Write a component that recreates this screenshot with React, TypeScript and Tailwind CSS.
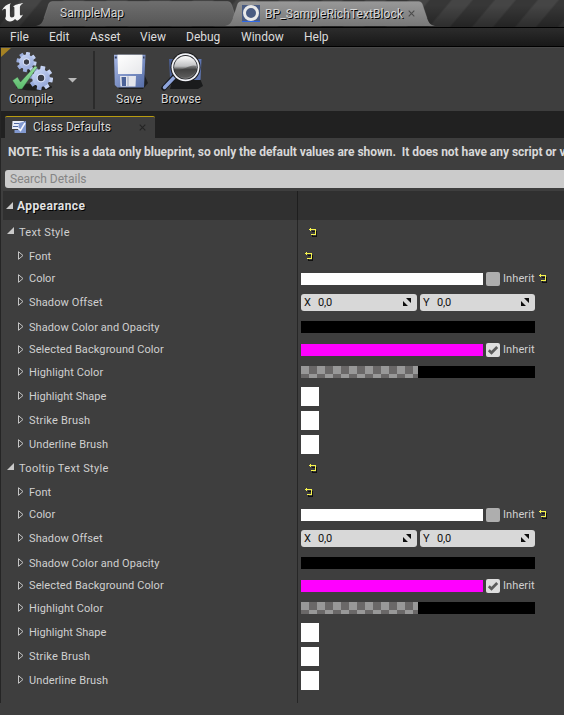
import React from "react";

const shadow = "[text-shadow:1px_1px_0_#000]";

function Gear({ cx, cy, r, id }: { cx: number; cy: number; r: number; id: string }) {
  return (
    <g fill={`url(#${id})`} transform={`translate(${cx} ${cy})`}>
      {[10, 55, 100, 145].map((a) => (
        <rect key={a} x={-r * 0.2} y={-r} width={r * 0.4} height={r * 2} rx="0.4" transform={`rotate(${a})`} />
      ))}
      <circle r={r * 0.74} />
      <circle r={r * 0.27} fill="#3a3d46" />
      <circle r={r * 0.33} fill="none" stroke="#e6ecfc" strokeWidth="0.8" />
    </g>
  );
}

function CompileIcon() {
  return (
    <svg width="44" height="40" viewBox="0 0 44 40" className="block">
      <defs>
        <linearGradient id="gear" gradientUnits="userSpaceOnUse" x1="-8" y1="-10" x2="8" y2="10">
          <stop offset="0" stopColor="#d0dcf8" />
          <stop offset="1" stopColor="#8b9fd4" />
        </linearGradient>
        <linearGradient id="tick" x1="0" y1="0" x2="0" y2="1">
          <stop offset="0" stopColor="#98dfa0" />
          <stop offset="1" stopColor="#5bbb6c" />
        </linearGradient>
      </defs>
      <ellipse cx="25" cy="35" rx="18" ry="3.500" fill="#151515" opacity=".75" />
      <path d="M20 15 L28 16 L24 25 L18 26Z" fill="#242628" />
      <Gear cx={17.5} cy={10} r={10} id="gear" />
      <Gear cx={32} cy={26} r={12} id="gear" />
      <path d="M3.500 28.500 L8.500 25 L11.500 30 L26 14 L28.500 15 L13 37 L9 37Z" fill="url(#tick)" stroke="#2f4a36" strokeWidth=".4" />
    </svg>
  );
}

function SaveIcon() {
  return (
    <svg width="38" height="38" viewBox="0 0 38 38" className="block">
      <defs>
        <linearGradient id="disk" x1="0" y1="0" x2="1" y2="1">
          <stop offset="0" stopColor="#a6b7e5" />
          <stop offset="1" stopColor="#556da7" />
        </linearGradient>
        <linearGradient id="paper" x1="0" y1="0" x2="1" y2="1">
          <stop offset="0" stopColor="#ffffff" />
          <stop offset="1" stopColor="#e6e7ea" />
        </linearGradient>
      </defs>
      <path d="M6 30 L33 20 L37 29 L32 35 L8 35Z" fill="#171819" opacity=".8" />
      <path d="M3 .8 H34.500 L33 33.500 H6.500 L3.800 31Z" fill="url(#disk)" />
      <path d="M6.500 .8 H31.500 L31 20 H7Z" fill="url(#paper)" />
      <path d="M9 22 H25 L24.500 32.500 H9.500Z" fill="#e4e6ed" />
      <path d="M10.500 23 H15 V32 H11Z" fill="#4b6298" />
      <rect x="16.500" y="22.500" width="1" height="9.500" fill="#9aa5c0" />
      <path d="M3.800 2.500h2v2h-2zM32 2.500h1.500v2h-1.500z" fill="#343f5e" />
    </svg>
  );
}

function BrowseIcon() {
  return (
    <svg width="42" height="40" viewBox="0 0 42 40" className="block">
      <defs>
        <linearGradient id="lens" x1="0" y1="0" x2="0" y2="1">
          <stop offset="0" stopColor="#ffffff" />
          <stop offset=".45" stopColor="#bfc0c2" />
          <stop offset=".6" stopColor="#4a4a4a" />
          <stop offset="1" stopColor="#858585" />
        </linearGradient>
      </defs>
      <path d="M12 26 L38 24 L42 34 L37 37 H9Z" fill="#141516" opacity=".85" />
      <path d="M8 7 H14 V26 H9Z" fill="#4b5f94" />
      <path d="M34 7 H40.500 L39.500 28 H31Z" fill="#5f76b2" />
      <path d="M3 36 L14 24" stroke="#16191f" strokeWidth="5.500" strokeLinecap="round" />
      <path d="M3.500 35.500 L14 24.500" stroke="#8fa5dc" strokeWidth="3.400" strokeLinecap="round" />
      <circle cx="24.500" cy="15.300" r="15" fill="#191a1c" />
      <circle cx="24.500" cy="15.300" r="14" fill="#f3f4f8" />
      <circle cx="24.500" cy="15.300" r="12.200" fill="#25272b" />
      <circle cx="24.500" cy="15.300" r="11.400" fill="url(#lens)" />
      <path d="M13.500 17.500 C20 21 29 11 35.500 14 C35 24 26 27 21 25.500 C17 24.500 14.500 21.500 13.500 17.500Z" fill="#3a3a3a" opacity=".5" />
    </svg>
  );
}

function UnrealLogo() {
  return (
    <svg width="24" height="22" viewBox="0 0 24 22" className="block">
      <path
        d="M.8 9.800 C2.400 5.600 6 3 10 2.200 C8.900 3.200 8.900 4.200 8.900 5.400 V14.300 C8.900 15.900 9.700 16.500 10.800 16.500 C12.200 16.500 13.400 15.500 13.400 14.200 V6.900 C13.400 5.900 12.700 5.500 11.900 5.900 C13.600 3.500 17.800 3 22.300 2 C20.500 3.200 18.900 4.500 18.900 6 V13.500 C18.900 14.900 20.300 15 22 13.600 C20.800 16.600 18.600 18.800 16.100 19.700 L14 17.900 C12.800 19.500 10.600 20.600 8.600 20.400 C5.600 20 4 18.500 4.200 17 C4.700 16.300 4.900 15.800 4.900 14.700 V9.300 C4.900 7 3 7.300 .8 9.800Z"
        fill="#f4f4f4"
      />
    </svg>
  );
}

function TabShape({ w, id, top, bottom }: { w: number; id: string; top: string; bottom: string }) {
  return (
    <svg width={w} height="25" className="absolute inset-0">
      <defs>
        <linearGradient id={id} x1="0" y1="0" x2="0" y2="1">
          <stop offset="0" stopColor={top} />
          <stop offset="1" stopColor={bottom} />
        </linearGradient>
      </defs>
      <path
        d={`M0 25 C5 24 6 22 8 17 L12 5 C13 1.500 14 .5 17 .5 H${w - 17} C${w - 14} .5 ${w - 13} 1.500 ${w - 12} 5 L${w - 8} 17 C${w - 6} 22 ${w - 5} 24 ${w} 25Z`}
        fill={`url(#${id})`}
      />
      <path
        d={`M8 17 L12 5 C13 1.500 14 .5 17 .5 H${w - 17} C${w - 14} .5 ${w - 13} 1.500 ${w - 12} 5 L${w - 8} 17`}
        fill="none"
        stroke="#a0a0a0"
        strokeOpacity=".25"
      />
    </svg>
  );
}

function Cross({ color }: { color: string }) {
  return (
    <svg width="7" height="7" viewBox="0 0 7 7" className="block">
      <path d="M.7 .7 L6.300 6.300 M6.300 .7 L.7 6.300" stroke={color} strokeWidth="1.100" />
    </svg>
  );
}

function Reset() {
  return (
    <svg width="9" height="9" viewBox="0 0 9 9" shapeRendering="crispEdges" className="block shrink-0">
      <path d="M3 3h5v6h-5v-2h1v1h3v-4h-4z" fill="#111" />
      <path d="M0 1h1v-1h1v1h5v6h-5v-1h4v-4h-4v1h-1v-1h-1z" fill="#f5f34e" />
    </svg>
  );
}

function Open() {
  return (
    <svg width="7" height="7" viewBox="0 0 7 7" className="block shrink-0">
      <path d="M7 0V7H0Z" fill="#c9c9c9" />
    </svg>
  );
}

function Closed() {
  return (
    <svg width="6" height="9" viewBox="0 0 6 9" className="mb-[2px] block shrink-0">
      <path d="M.5 .7V8.300L5 4.500Z" fill="none" stroke="#c4c4c4" strokeWidth="1" />
    </svg>
  );
}

function NumberField({ axis, wide }: { axis: string; wide?: boolean }) {
  return (
    <div
      className={`flex h-[17px] items-center rounded-[3px] bg-[#d8d8d8] pl-[3px] text-[11px] leading-[17px] text-[#111] ${wide ? "w-[116px]" : "w-[115px]"}`}
    >
      <span className="w-[14px]">{axis}</span>
      <span className="flex-1 tracking-[-0.2px]">0,0</span>
      <svg width="8" height="8" viewBox="0 0 8 8" className="mr-[6px] mb-px block">
        <path d="M3 0H8V5ZM0 3V8H5Z" fill="#0c0c0c" />
      </svg>
    </div>
  );
}

function Inherit({ checked }: { checked?: boolean }) {
  return (
    <>
      <div className={`ml-[3px] h-[14px] w-[14px] rounded-[2px] ${checked ? "bg-[#dedede]" : "bg-[#aeaeae]"}`}>
        {checked && (
          <svg width="14" height="14" viewBox="0 0 14 14" className="block">
            <path d="M2.800 7.200 L5.500 9.800 L11.200 4" fill="none" stroke="#5c5c5c" strokeWidth="2.700" />
          </svg>
        )}
      </div>
      <span className="ml-[3px] w-[32px] text-[11px] leading-[16px] tracking-[0.1px] text-[#d0d0d0]">Inherit</span>
    </>
  );
}

function Row({ label, h, track, children }: { label: string; h: string; track: string; children: React.ReactNode }) {
  return (
    <div className={`flex ${h}`}>
      <div className="flex w-[297px] items-center border-r border-[#262626] pl-[17px]">
        <Closed />
        <span className={`ml-[5px] text-[11px] leading-[16px] text-[#d0d0d0] ${h === "h-[22px]" ? "" : "pt-px"} ${track}`}>{label}</span>
      </div>
      <div className="flex items-center pl-[3px]">{children}</div>
    </div>
  );
}

function Brush() {
  return <div className="h-[19px] w-[18px] bg-white" />;
}

function StyleGroup({ title }: { title: string }) {
  return (
    <div>
      <div className="flex h-6">
        <div className="flex w-[297px] items-center border-r border-[#262626] pl-[6px]">
          <div className="mb-[3px]">
            <Open />
          </div>
          <span className="ml-[5px] pt-px text-[11px] leading-[16px] tracking-[0.33px] text-[#d0d0d0]">{title}</span>
        </div>
        <div className="flex items-center pl-[11px]">
          <Reset />
        </div>
      </div>
      <Row label="Font" h="h-6" track="tracking-[0.1px]">
        <div className="pl-1">
          <Reset />
        </div>
      </Row>
      <Row label="Color" h="h-[22px]" track="tracking-[0px]">
        <div className="h-3 w-[182px] bg-white" />
        <Inherit />
        <div className="mb-px ml-1">
          <Reset />
        </div>
      </Row>
      <Row label="Shadow Offset" h="h-[25px]" track="tracking-[0.1px]">
        <div className="flex gap-[3px]">
          <NumberField axis="X" wide />
          <NumberField axis="Y" />
        </div>
      </Row>
      <Row label="Shadow Color and Opacity" h="h-6" track="tracking-[0.07px]">
        <div className="h-3 w-[234px] bg-black" />
      </Row>
      <Row label="Selected Background Color" h="h-[22px]" track="tracking-[0.1px]">
        <div className="h-3 w-[182px] bg-[#ff00ff]" />
        <Inherit checked />
      </Row>
      <Row label="Highlight Color" h="h-[23px]" track="tracking-[0.1px]">
        <div className="mb-px h-3 w-[117px] bg-[repeating-conic-gradient(#6a6868_0_25%,#989898_0_50%)] bg-[length:16px_16px]" />
        <div className="mb-px h-3 w-[117px] bg-black" />
      </Row>
      <Row label="Highlight Shape" h="h-6" track="tracking-[0px]">
        <Brush />
      </Row>
      <Row label="Strike Brush" h="h-6" track="tracking-[0.2px]">
        <Brush />
      </Row>
      <Row label="Underline Brush" h="h-6" track="tracking-[0.12px]">
        <Brush />
      </Row>
    </div>
  );
}

export default function App() {
  return (
    <div className="h-[715px] w-[564px] overflow-hidden bg-[#3e3e3e] font-[Roboto,sans-serif] text-[12px] text-[#d6d6d6]">
      <header className="flex h-[27px] items-end overflow-hidden bg-[linear-gradient(to_bottom,transparent_20%,rgba(0,0,0,0.35)),repeating-linear-gradient(130deg,#373737_0_15px,#454545_17px_31px,#373737_33px)] pb-px">
        <div className="flex h-full w-9 pt-px pl-px">
          <UnrealLogo />
        </div>
        <div className="relative h-[25px] w-[208px] shrink-0">
          <TabShape w={208} id="tabA" top="#6e6e6e" bottom="#565656" />
          <span className={`relative block pt-[4px] pl-6 text-[12px] leading-[16px] ${shadow}`}>SampleMap</span>
        </div>
        <div className="relative -ml-[19px] h-[25px] w-[210px] shrink-0">
          <TabShape w={210} id="tabB" top="#989898" bottom="#787878" />
          <div className="relative flex h-[25px] items-center pl-[17px]">
            <div className="flex h-[17px] w-[18px] items-center justify-center border-b border-[#2d68e8] bg-[#495b82]">
              <div className="h-[16px] w-[16px] rounded-full border-[3px] border-[#e9e9e9]" />
            </div>
            <span className={`ml-[5px] w-[143px] text-[12px] tracking-[0.08px] ${shadow}`}>BP_SampleRichTextBlock</span>
            <Cross color="#4c4c4c" />
          </div>
        </div>
      </header>
      <nav className="flex h-5 items-center border-y border-black bg-gradient-to-b from-[#2c2c2c] to-[#181818] pl-[10px] text-[12px] text-[#dcdcdc]">
        <span className="w-[39px]">File</span>
        <span className="w-[41px]">Edit</span>
        <span className="w-[50px]">Asset</span>
        <span className="w-[46px]">View</span>
        <span className="w-[55px]">Debug</span>
        <span className="w-[63px]">Window</span>
        <span>Help</span>
      </nav>
      <div className="border-l border-[#252525]">
        <div className="relative flex h-[64px] border-t border-[#484848] bg-[#3e3e3e]">
          <svg width="10" height="10" className="absolute top-0 left-0">
            <path d="M0 0H10L0 9Z" fill="#a58224" />
          </svg>
          <div className="flex w-[92px] pt-[4px] pl-[8px]">
            <div>
              <CompileIcon />
              <div className={`-mt-px leading-[16px] ${shadow}`}>Compile</div>
            </div>
            <svg width="9" height="5" className="mt-[26px] ml-[15px] shrink-0">
              <path d="M0 0H9L4.500 4.500Z" fill="#b9b9b9" />
            </svg>
          </div>
          <div className="mt-[3px] h-[58px] w-[2px] bg-[#2b2b2b]" />
          <div className="w-[44px] pt-[6px] pl-[16px]">
            <SaveIcon />
            <div className={`-mt-px pl-[5px] leading-[16px] ${shadow}`}>Save</div>
          </div>
          <div className="w-[60px] pt-[4px] pl-[22px]">
            <BrowseIcon />
            <div className={`-mt-px leading-[16px] ${shadow}`}>Browse</div>
          </div>
        </div>
        <div className="flex h-[27px] items-end bg-[#212121] pl-[4px]">
          <div className="flex h-[22px] w-[150px] items-center rounded-t-[2px] border-t border-[#b89b10] bg-[#3e3e3e] pb-px pl-[6px]">
            <svg width="16" height="14" viewBox="0 0 16 14" className="block">
              <path d="M1.500 1H13L12 9H1Z" fill="#e9edf8" />
              <path d="M3 3.500H8M2 6.500H7" stroke="#5068a0" />
              <path d="M8 3L15 1V13H3.500V10H7Z" fill="#8299d0" />
              <path d="M7 8L9.500 10.500L14 3" fill="none" stroke="#f5f7ff" strokeWidth="1.500" />
            </svg>
            <span className={`ml-[6px] w-[106px] text-[12px] tracking-[0.05px] ${shadow}`}>Class Defaults</span>
            <Cross color="#242424" />
          </div>
        </div>
        <div className="h-[32px] pt-[6px] pl-[7px] text-[12px] leading-[16px] font-bold tracking-[-0.04px] whitespace-pre text-[#d8d8d8]">
          NOTE: This is a data only blueprint, so only the default values are shown.{"  "}It does not have any script or v
        </div>
        <div className="ml-[4px] h-[18px] rounded-l-[3px] bg-[#cbcbcb] pl-[5px] text-[12px] leading-[18px] text-[#858585]">Search Details</div>
        <div className="mt-[3px] ml-[2px] flex h-[29px] bg-[#303030]">
          <div className="flex w-[295px] items-center border-r border-[#1e1e1e] pl-[3px]">
            <Open />
            <span className={`ml-[4px] text-[12px] font-bold tracking-[0.4px] text-[#e2e2e2] ${shadow}`}>Appearance</span>
          </div>
        </div>
        <StyleGroup title="Text Style" />
        <StyleGroup title="Tooltip Text Style" />
        <div className="h-[11px] w-[297px] border-r border-[#262626]" />
      </div>
    </div>
  );
}
